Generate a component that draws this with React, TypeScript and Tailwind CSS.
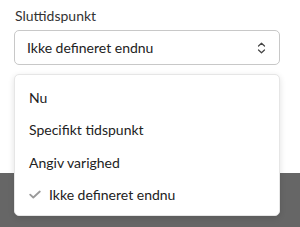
import React from "react";

export default function App() {
  return (
    <div className="relative w-[300px] h-[227px] bg-white overflow-hidden" style={{ fontFamily: "Lato, 'Noto Sans', sans-serif" }}>
      <div className="h-[173px] bg-white px-[14px] pt-[6px]">
        <div className="pl-[1px] text-[14px] leading-[20px] text-[#333]">Sluttidspunkt</div>
        <div className="mt-[4px] h-[35px] w-[266px] rounded-[5px] border border-[#c8c8c8] flex items-center justify-between pl-[12px] pr-[13px]">
          <span className="text-[14px] text-[#222]">Ikke defineret endnu</span>
          <svg width="9" height="12" viewBox="0 0 9 12" fill="none" stroke="#444" strokeWidth="1.2" strokeLinecap="round" strokeLinejoin="round">
            <path d="M1.5 4 L4.5 1.2 L7.5 4" />
            <path d="M1.5 8 L4.5 10.8 L7.5 8" />
          </svg>
        </div>
      </div>
      <div className="h-[54px] bg-[#666]" />
      <div className="absolute left-[14px] top-[74px] w-[266px] bg-white rounded-[5px] border border-[#e6e6e6] shadow-[0_2px_6px_rgba(0,0,0,0.12)] pt-[6px] pb-[4px] flex flex-col">
        {["Nu", "Specifikt tidspunkt", "Angiv varighed"].map((t) => (
          <div key={t} className="h-[32.5px] shrink-0 flex items-center pl-[14px] text-[14px] text-[#222]">{t}</div>
        ))}
        <div className="h-[32.5px] shrink-0 flex items-center pl-[14px] text-[14px] text-[#222]">
          <svg width="12" height="9" viewBox="0 0 12 9" fill="none" stroke="#9a9a9a" strokeWidth="1.8" strokeLinecap="round" strokeLinejoin="round" className="mr-[8px]">
            <path d="M1.2 4.6 L4.3 7.5 L10.8 1.5" />
          </svg>
          <span>Ikke defineret endnu</span>
        </div>
      </div>
    </div>
  );
}
